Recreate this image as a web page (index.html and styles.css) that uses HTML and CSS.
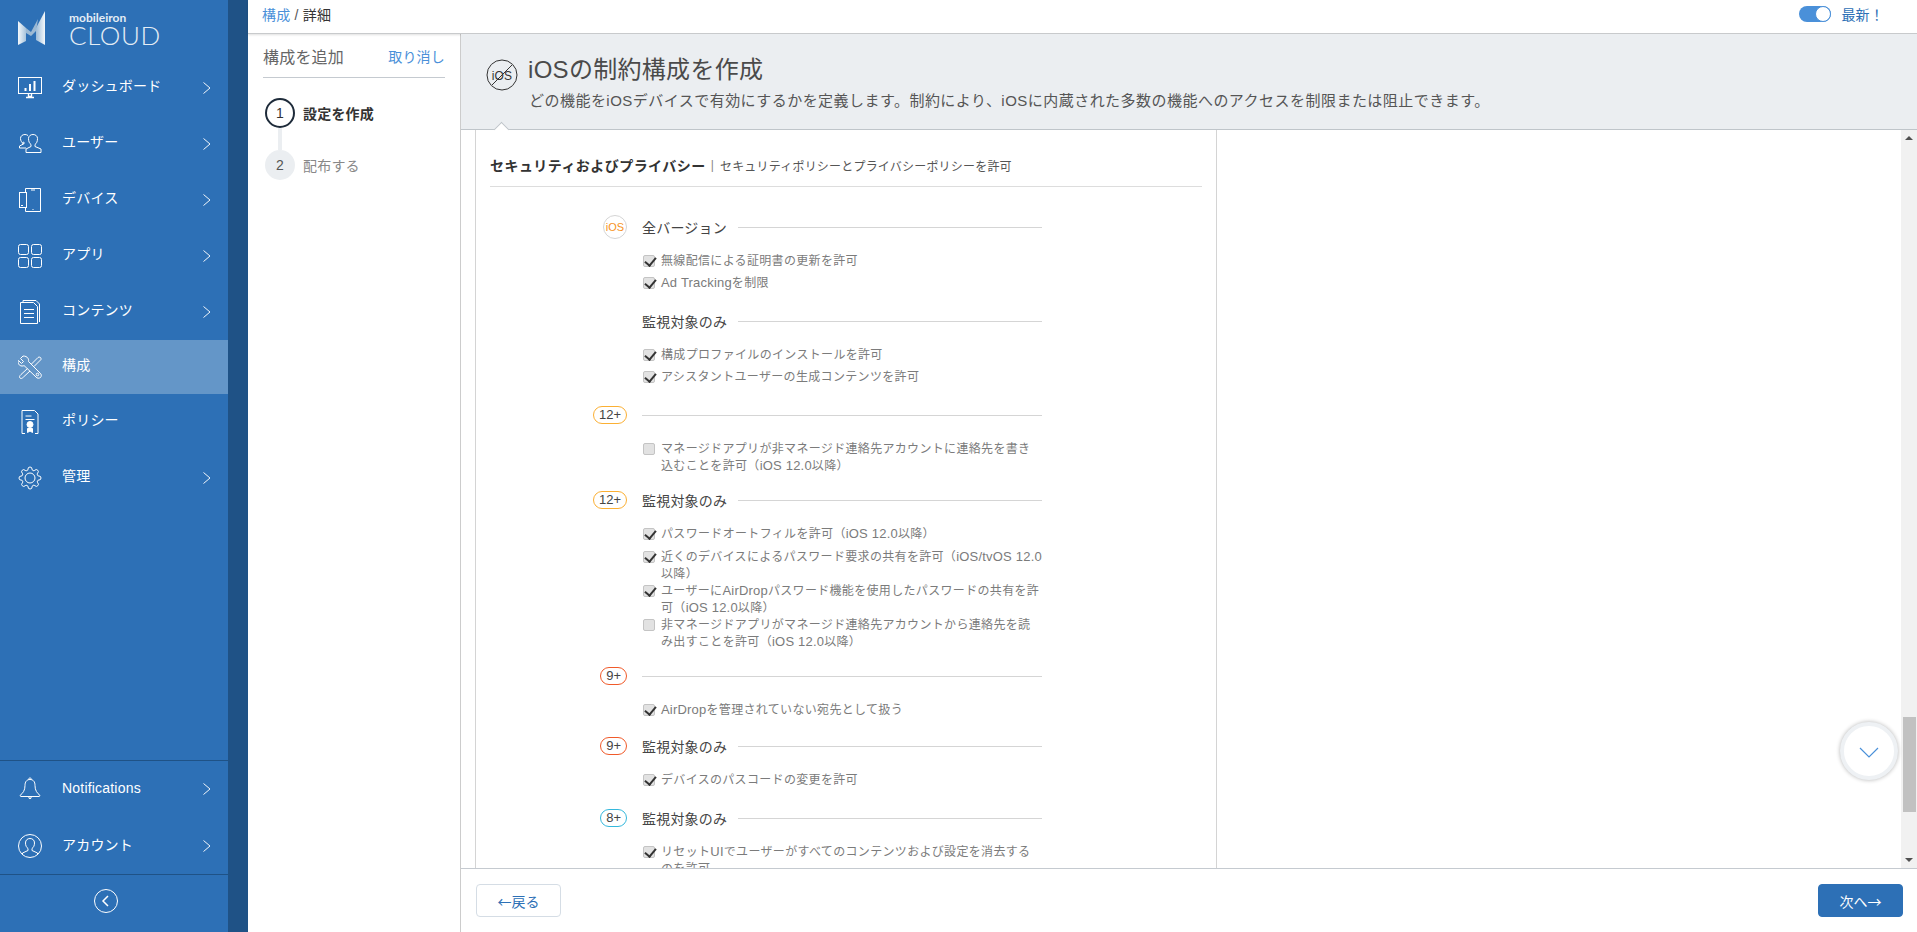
FILE: index.html
```html
<!DOCTYPE html>
<html lang="ja">
<head>
  <meta charset="UTF-8">
  <meta name="viewport" content="width=device-width, initial-scale=1.0">
  <title>iOSの制約構成を作成</title>
  <link rel="stylesheet" href="styles.css">
</head>
<body>
  <aside class="sidebar">
    <div class="brand">
      <svg class="brand-mark" viewBox="0 0 27 34" width="27" height="34">
        <defs>
          <linearGradient id="leg" x1="0" y1="0" x2="1" y2="0">
            <stop offset="0" stop-color="#9dbcd8"/>
            <stop offset="1" stop-color="#f4f8fb"/>
          </linearGradient>
          <linearGradient id="legl" x1="0" y1="0" x2="1" y2="0">
            <stop offset="0" stop-color="#f4f8fb"/>
            <stop offset="1" stop-color="#a8c4dc"/>
          </linearGradient>
        </defs>
        <polygon points="0,10 8,17 8,30 0,34" fill="url(#legl)"/>
        <polygon points="8,17 13,21 20,8 18,20 13,25 8,22" fill="#9cb9d3"/>
        <polygon points="27,0 27,34 18,29 18,17" fill="url(#leg)"/>
      </svg>
      <div class="brand-text">
        <span class="brand-small">mobileiron</span>
        <span class="brand-big">CLOUD</span>
      </div>
    </div>
    <nav class="nav">
      <a class="nav-item">
        <svg class="nav-icon" viewBox="0 0 24 24"><rect x=".5" y="1.5" width="23" height="16"/><path d="M7.5 15v-3M12 15V8M16.5 15V5" stroke-width="2"/><path d="M8 21.5h8M10.5 18v2.5h3V18" stroke-width="1.4"/></svg>
        <span class="nav-label">ダッシュボード</span>
        <svg class="nav-arrow" viewBox="0 0 8 12"><path d="M.5.5 7 6 .5 11.5"/></svg>
      </a>
      <a class="nav-item">
        <svg class="nav-icon" viewBox="0 0 24 24"><path d="M10.5 6.5C10.5 4 12.500 2.500 15 2.500s4.500 1.500 4.500 4c0 3-1 5-2.500 6v2l6 2.500v3.500H8v-3.500l5-2.500v-2c-1.500-1-2.500-3-2.500-6z"/><path d="M8 16H1.500v-2l4-2c-1.500-1.500-3-3-3-5.500C2.500 4 4.500 2.500 7 2.500c1 0 2 .3 3 1"/><circle cx="5.500" cy="11" r=".8"/></svg>
        <span class="nav-label">ユーザー</span>
        <svg class="nav-arrow" viewBox="0 0 8 12"><path d="M.5.5 7 6 .5 11.5"/></svg>
      </a>
      <a class="nav-item">
        <svg class="nav-icon" viewBox="0 0 24 24"><path d="M7.500 4.500V.5h15v23h-15v-4"/><rect x="1.500" y="4.500" width="7" height="15"/><path d="M13 2h4M3 17.500h2M14.500 21.500h1"/></svg>
        <span class="nav-label">デバイス</span>
        <svg class="nav-arrow" viewBox="0 0 8 12"><path d="M.5.5 7 6 .5 11.5"/></svg>
      </a>
      <a class="nav-item">
        <svg class="nav-icon" viewBox="0 0 24 24"><rect x=".5" y=".5" width="10" height="10" rx="2"/><rect x="13.500" y=".5" width="10" height="10" rx="2"/><rect x=".5" y="13.500" width="10" height="10" rx="2"/><rect x="13.500" y="13.500" width="10" height="10" rx="2"/></svg>
        <span class="nav-label">アプリ</span>
        <svg class="nav-arrow" viewBox="0 0 8 12"><path d="M.5.5 7 6 .5 11.5"/></svg>
      </a>
      <a class="nav-item">
        <svg class="nav-icon" viewBox="0 0 24 24"><path d="M2.500 2.500h13l4 4v17h-17z"/><path d="M5 2.500V.5h13l3.500 3.500v18"/><path d="M6 9.500h10M6 13.500h10M6 17.500h10"/></svg>
        <span class="nav-label">コンテンツ</span>
        <svg class="nav-arrow" viewBox="0 0 8 12"><path d="M.5.5 7 6 .5 11.5"/></svg>
      </a>
      <a class="nav-item nav-item-active">
        <svg class="nav-icon" viewBox="0 0 24 24"><path d="M5 1 2.500 3.500l3 3-2 2-3-3C-.5 8 1 11 4 11c1 0 1.500 0 2-.5L18 22c1 1.500 3 1.500 4.500.5 1.200-1.500 1-3.300-.3-4.300L10.500 6.500c.5-2-.5-5.500-5.500-5.500z"/><circle cx="19.500" cy="19.500" r="1.300"/><path d="M13.500 9 20 2.500c1-1 3-.2 3 1 .3.700 0 1-.5 1.500L16 11.500M9.500 13.500 3 19.500c-1.500 1.500-2 2.500-1 3.500s2.200.4 3.500-1l6.500-6"/></svg>
        <span class="nav-label">構成</span>
      </a>
      <a class="nav-item">
        <svg class="nav-icon" viewBox="0 0 24 24"><path d="M7 23.500H4V.5h12.500L20 4v19.500h-3"/><path d="M7.500 6h6M7.500 9.500h9"/><circle cx="12" cy="14.500" r="3" fill="#fff"/><path d="M9.500 22.500v-4h5v4l-2.500-1.500z" fill="#fff"/></svg>
        <span class="nav-label">ポリシー</span>
      </a>
      <a class="nav-item">
        <svg class="nav-icon" viewBox="0 0 24 24"><circle cx="12" cy="12" r="5"/><path d="M19.400 15a1.650 1.650 0 0 0 .33 1.820l.06.06a2 2 0 0 1 0 2.830 2 2 0 0 1-2.830 0l-.06-.06a1.650 1.650 0 0 0-1.820-.33 1.650 1.650 0 0 0-1 1.510V21a2 2 0 0 1-2 2 2 2 0 0 1-2-2v-.09A1.650 1.650 0 0 0 9 19.400a1.650 1.650 0 0 0-1.820.33l-.06.06a2 2 0 0 1-2.830 0 2 2 0 0 1 0-2.830l.06-.06a1.650 1.650 0 0 0 .33-1.820 1.650 1.650 0 0 0-1.510-1H3a2 2 0 0 1-2-2 2 2 0 0 1 2-2h.09A1.650 1.650 0 0 0 4.600 9a1.650 1.650 0 0 0-.33-1.820l-.06-.06a2 2 0 0 1 0-2.830 2 2 0 0 1 2.830 0l.06.06a1.650 1.650 0 0 0 1.820.33H9a1.650 1.650 0 0 0 1-1.510V3a2 2 0 0 1 2-2 2 2 0 0 1 2 2v.09a1.650 1.650 0 0 0 1 1.510 1.650 1.650 0 0 0 1.820-.33l.06-.06a2 2 0 0 1 2.830 0 2 2 0 0 1 0 2.830l-.06.06a1.650 1.650 0 0 0-.33 1.820V9a1.650 1.650 0 0 0 1.510 1H21a2 2 0 0 1 2 2 2 2 0 0 1-2 2h-.09a1.650 1.650 0 0 0-1.510 1z"/></svg>
        <span class="nav-label">管理</span>
        <svg class="nav-arrow" viewBox="0 0 8 12"><path d="M.5.5 7 6 .5 11.5"/></svg>
      </a>
    </nav>
    <div class="nav-bottom">
      <a class="nav-item nav-item-tall">
        <svg class="nav-icon" viewBox="0 0 24 24"><path d="M12 2.500c-3.500 0-5 2.500-5 6 0 5-2 7.500-5 10 0 .5.5 1 1 1h18c.5 0 1-.5 1-1-3-2.500-5-5-5-10 0-3.500-1.500-6-5-6z"/><path d="M10.500 2.500c0-2 3-2 3 0"/><path d="M10.500 20.500c.5 1.500 2.500 1.500 3 0" fill="#fff"/></svg>
        <span class="nav-label">Notifications</span>
        <svg class="nav-arrow" viewBox="0 0 8 12"><path d="M.5.5 7 6 .5 11.5"/></svg>
      </a>
      <a class="nav-item nav-item-tall">
        <svg class="nav-icon" viewBox="0 0 24 24"><circle cx="12" cy="12" r="11.500"/><path d="M4.500 20.500v-1.500l5.500-2.500v-2c-1.500-1-2.500-3-2.500-5.500 0-3 2-4.500 4.500-4.500s4.500 1.500 4.500 4.500c0 2.500-1 4.500-2.500 5.500v2l5.500 2.500v1.500"/></svg>
        <span class="nav-label">アカウント</span>
        <svg class="nav-arrow" viewBox="0 0 8 12"><path d="M.5.5 7 6 .5 11.5"/></svg>
      </a>
    </div>
    <div class="collapse">
      <svg class="collapse-icon" viewBox="0 0 24 24"><circle cx="12" cy="12" r="11.500"/><path d="M14 7l-5 5 5 5" stroke-width="1.500"/></svg>
    </div>
  </aside>

  <div class="page">
    <header class="topbar">
      <div class="crumbs"><a class="link">構成</a> / <span class="crumb-current">詳細</span></div>
      <div class="fresh">
        <span class="toggle"><span class="toggle-knob"></span></span>
        <span class="fresh-label">最新！</span>
      </div>
    </header>

    <div class="workspace">
      <div class="wizard">
        <div class="wizard-head">
          <span class="wizard-title">構成を追加</span>
          <a class="link">取り消し</a>
        </div>
        <div class="steps">
          <div class="step step-current"><span class="step-num">1</span><span>設定を作成</span></div>
          <div class="step-link"></div>
          <div class="step"><span class="step-num">2</span><span>配布する</span></div>
        </div>
      </div>

      <main class="editor">
        <div class="banner">
          <svg class="banner-icon" viewBox="0 0 32 32">
            <circle cx="16" cy="16" r="15"/>
            <text x="16" y="20.500" text-anchor="middle">iOS</text>
            <path d="M6 26 26 6"/>
          </svg>
          <div class="banner-text">
            <h1>iOSの制約構成を作成</h1>
            <p>どの機能をiOSデバイスで有効にするかを定義します。制約により、iOSに内蔵された多数の機能へのアクセスを制限または阻止できます。</p>
          </div>
          <span class="banner-notch"></span>
        </div>

        <div class="scroller">
          <div class="scroll-body">
            <section class="panel">
              <div class="panel-head">
                <strong class="panel-title">セキュリティおよびプライバシー</strong><span class="panel-sep">|</span><span class="panel-sub">セキュリティポリシーとプライバシーポリシーを許可</span>
              </div>

              <div class="group-head">
                <span class="badge-slot"><span class="badge-ios">iOS</span></span>
                <span class="group-title">全バージョン</span><span class="group-line"></span>
              </div>
              <div class="group">
                <label class="row"><input type="checkbox" checked disabled>無線配信による証明書の更新を許可</label>
                <label class="row"><input type="checkbox" checked disabled><span class="en">Ad Tracking</span>を制限</label>
              </div>

              <div class="group-head">
                <span class="badge-slot"></span>
                <span class="group-title">監視対象のみ</span><span class="group-line"></span>
              </div>
              <div class="group">
                <label class="row"><input type="checkbox" checked disabled>構成プロファイルのインストールを許可</label>
                <label class="row"><input type="checkbox" checked disabled>アシスタントユーザーの生成コンテンツを許可</label>
              </div>

              <div class="group-head">
                <span class="badge-slot"><span class="badge badge-12">12+</span></span>
                <span class="group-line"></span>
              </div>
              <div class="group group-wrapped">
                <label class="row row-wrap"><input type="checkbox" disabled>マネージドアプリが非マネージド連絡先アカウントに連絡先を書き込むことを許可（<span class="en">iOS 12.0</span>以降）</label>
              </div>

              <div class="group-head">
                <span class="badge-slot"><span class="badge badge-12">12+</span></span>
                <span class="group-title">監視対象のみ</span><span class="group-line"></span>
              </div>
              <div class="group group-wrapped">
                <label class="row row-tall"><input type="checkbox" checked disabled>パスワードオートフィルを許可（<span class="en">iOS 12.0</span>以降）</label>
                <label class="row row-wrap"><input type="checkbox" checked disabled>近くのデバイスによるパスワード要求の共有を許可（<span class="en">iOS/tvOS 12.0</span>以降）</label>
                <label class="row row-wrap"><input type="checkbox" checked disabled>ユーザーに<span class="en">AirDrop</span>パスワード機能を使用したパスワードの共有を許可（<span class="en">iOS 12.0</span>以降）</label>
                <label class="row row-wrap"><input type="checkbox" disabled>非マネージドアプリがマネージド連絡先アカウントから連絡先を読み出すことを許可（<span class="en">iOS 12.0</span>以降）</label>
              </div>

              <div class="group-head">
                <span class="badge-slot"><span class="badge badge-9">9+</span></span>
                <span class="group-line"></span>
              </div>
              <div class="group group-tight">
                <label class="row"><input type="checkbox" checked disabled><span class="en">AirDrop</span>を管理されていない宛先として扱う</label>
              </div>

              <div class="group-head">
                <span class="badge-slot"><span class="badge badge-9">9+</span></span>
                <span class="group-title">監視対象のみ</span><span class="group-line"></span>
              </div>
              <div class="group">
                <label class="row"><input type="checkbox" checked disabled>デバイスのパスコードの変更を許可</label>
              </div>

              <div class="group-head">
                <span class="badge-slot"><span class="badge badge-8">8+</span></span>
                <span class="group-title">監視対象のみ</span><span class="group-line"></span>
              </div>
              <div class="group">
                <label class="row row-wrap"><input type="checkbox" checked disabled>リセット<span class="en">UI</span>でユーザーがすべてのコンテンツおよび設定を消去するのを許可</label>
              </div>
            </section>
          </div>
          <div class="scrollbar">
            <span class="scroll-up"></span>
            <span class="scroll-thumb"></span>
            <span class="scroll-down"></span>
          </div>
          <button class="jump" type="button">
            <svg viewBox="0 0 20 12" width="20" height="12"><path d="M1 1l9 9 9-9"/></svg>
          </button>
        </div>

        <footer class="actions">
          <button class="btn btn-back" type="button">←戻る</button>
          <button class="btn btn-next" type="button">次へ→</button>
        </footer>
      </main>
    </div>
  </div>
</body>
</html>
```

FILE: styles.css
```css
* {
  box-sizing: border-box;
}
html, body {
  height: 100%;
}
body {
  margin: 0;
  display: flex;
  height: 100vh;
  overflow: hidden;
  font-family: "Liberation Sans", "Noto Sans CJK JP", sans-serif;
  font-size: 14px;
  letter-spacing: .2px;
  color: #555;
  background-color: #fff;
}
.link {
  color: #4a90d9;
}

/* sidebar */
.sidebar {
  flex: none;
  width: 248px;
  display: flex;
  flex-direction: column;
  background-color: #2d70b6;
  border-right: 20px solid #1f5286;
  color: #fff;
}
.brand {
  height: 60px;
  display: flex;
  align-items: flex-start;
  padding: 11px 0 0 18px;
}
.brand-text {
  display: flex;
  flex-direction: column;
  margin-left: 24px;
}
.brand-small {
  font-family: Lato, sans-serif;
  font-size: 12px;
  font-weight: 700;
  line-height: 13px;
  letter-spacing: 0;
  color: #e4edf5;
}
.brand-big {
  font-family: Lato, sans-serif;
  font-size: 26px;
  font-weight: 300;
  line-height: 23px;
  letter-spacing: .6px;
  color: #e4edf5;
}
.nav {
  flex: 1;
}
.nav-item {
  display: flex;
  align-items: center;
  height: 56px;
  padding-left: 18px;
}
.nav-item-active {
  height: 54px;
  background-color: #6496c8;
}
.nav-item-tall {
  height: 56.5px;
}
.nav-icon {
  flex: none;
  width: 24px;
  height: 24px;
  fill: none;
  stroke: #fff;
  stroke-width: 1;
}
.nav-label {
  flex: 1;
  margin-left: 20px;
  padding-bottom: 6px;
  font-size: 14px;
}
.nav-item-tall .nav-label {
  padding-bottom: 3px;
}
.nav-arrow {
  flex: none;
  width: 8px;
  height: 12px;
  margin-right: 17px;
  fill: none;
  stroke: #f0f5fa;
  stroke-width: 1;
}
.nav-bottom {
  border-top: 1px solid #1f5286;
  border-bottom: 1px solid #1f5286;
}
.collapse {
  height: 57px;
  display: flex;
  align-items: center;
  padding: 0 0 5px 94px;
}
.collapse-icon {
  width: 24px;
  height: 24px;
  fill: none;
  stroke: #fff;
  stroke-width: 1;
}

/* top bar */
.page {
  flex: 1;
  min-width: 0;
  display: flex;
  flex-direction: column;
}
.topbar {
  flex: none;
  height: 34px;
  display: flex;
  align-items: center;
  justify-content: space-between;
  padding: 0 33px 5px 14px;
  border-bottom: 1px solid #c8cacc;
  box-shadow: 0 1px 2px rgba(0, 0, 0, .12);
  position: relative;
}
.crumb-current {
  color: #333;
}
.fresh {
  display: flex;
  align-items: center;
}
.toggle {
  display: flex;
  justify-content: flex-end;
  width: 32px;
  height: 16px;
  border-radius: 8px;
  background-color: #4a90d9;
}
.toggle-knob {
  width: 16px;
  height: 16px;
  border-radius: 50%;
  background-color: #fff;
  border: 1px solid #4a90d9;
}
.fresh-label {
  margin-left: 10px;
  color: #2d70b6;
  font-size: 14px;
}

.workspace {
  flex: 1;
  min-height: 0;
  display: flex;
}

/* wizard steps */
.wizard {
  flex: none;
  width: 213px;
  padding: 0 15px;
  border-right: 1px solid #ccc;
}
.wizard-head {
  display: flex;
  align-items: center;
  justify-content: space-between;
  height: 44px;
  border-bottom: 1px solid #c5cad0;
}
.wizard-title {
  font-size: 16px;
  color: #666;
}
.steps {
  padding: 20px 0 0 2px;
}
.step {
  display: flex;
  align-items: center;
  color: #888;
}
.step-num {
  width: 30px;
  height: 30px;
  margin-right: 8px;
  display: flex;
  align-items: center;
  justify-content: center;
  border-radius: 50%;
  background-color: #ebeef1;
  color: #555;
}
.step-current {
  color: #333;
  font-weight: 700;
}
.step-current .step-num {
  background-color: #fff;
  border: 2px solid #1e2b3a;
  color: #333;
  font-weight: 400;
}
.step-link {
  width: 4px;
  height: 22px;
  margin-left: 13px;
  background-color: #ebeef1;
}

/* editor */
.editor {
  flex: 1;
  min-width: 0;
  display: flex;
  flex-direction: column;
}
.banner {
  flex: none;
  height: 96px;
  display: flex;
  align-items: flex-start;
  padding: 25px 0 0 25px;
  position: relative;
  background-color: #ebeef1;
  border-bottom: 1px solid #bfc5ca;
}
.banner-icon {
  flex: none;
  width: 32px;
  height: 32px;
  fill: none;
  stroke: #333;
  stroke-width: 1;
}
.banner-icon text {
  font-size: 12px;
  fill: #333;
  stroke: none;
}
.banner-text {
  margin-left: 10px;
}
.banner-text h1 {
  margin: -4px 0 0;
  font-size: 24px;
  font-weight: 400;
  line-height: 30px;
  letter-spacing: .3px;
  color: #4a4a4a;
}
.banner-text p {
  margin: 5px 0 0 1px;
  font-size: 15px;
  line-height: 22px;
  letter-spacing: .47px;
  color: #555;
}
.banner-notch {
  position: absolute;
  left: 35px;
  bottom: -6px;
  width: 11px;
  height: 11px;
  background-color: #fff;
  border-left: 1px solid #bfc5ca;
  border-top: 1px solid #bfc5ca;
  transform: rotate(45deg);
}
.scroller {
  flex: 1;
  min-height: 0;
  display: flex;
  position: relative;
}
.scroll-body {
  flex: 1;
  min-width: 0;
  overflow: hidden;
  padding-left: 14px;
}
.panel {
  width: 742px;
  min-height: 100%;
  padding: 0 14px 0 14px;
  border-left: 1px solid #d4d4d4;
  border-right: 1px solid #d4d4d4;
}
.panel-head {
  display: flex;
  align-items: center;
  height: 57px;
  padding-top: 14px;
  margin-bottom: 28px;
  border-bottom: 1px solid #ddd;
  color: #333;
}
.panel-title {
  letter-spacing: .45px;
}
.panel-sep {
  margin: 0 6px 0 5px;
  color: #888;
  font-size: 12px;
}
.panel-sub {
  font-size: 12px;
  color: #555;
}
.group-head {
  display: flex;
  align-items: center;
  height: 24px;
  margin-left: 100px;
  width: 452px;
  margin-bottom: 14px;
}
.badge-slot {
  flex: none;
  width: 37px;
  margin-right: 15px;
  display: flex;
  justify-content: flex-end;
}
.group-title {
  margin-right: 11px;
  padding-bottom: 1px;
  color: #444;
}
.group-line {
  flex: 1;
  border-top: 1px solid #d5d5d5;
}
.badge {
  height: 18px;
  padding: 0 5px;
  border: 1.5px solid #aaa;
  border-radius: 9px;
  font-size: 13px;
  line-height: 15px;
  letter-spacing: 0;
  color: #444;
}
.badge-12 {
  border-color: #fbb034;
}
.badge-9 {
  border-color: #f05a2a;
}
.badge-8 {
  border-color: #35b8dc;
}
.badge-ios {
  width: 24px;
  height: 24px;
  border: 1px solid #d5d5d5;
  border-radius: 50%;
  text-align: center;
  font-size: 11px;
  line-height: 22px;
  letter-spacing: 0;
  color: #f7931e;
}
.group {
  margin-left: 152px;
  width: 400px;
  margin-bottom: 17px;
}
.group-wrapped {
  margin-bottom: 13px;
}
.group-tight {
  margin-bottom: 15px;
}
.row {
  display: block;
  position: relative;
  padding-left: 19px;
  margin-bottom: 5px;
  font-size: 12px;
  line-height: 17px;
  letter-spacing: .33px;
  color: #7b7b7b;
}
.row .en {
  font-size: 13px;
  line-height: 1;
  letter-spacing: .2px;
}
.row-tall {
  margin-bottom: 6px;
}
.row-wrap {
  margin-bottom: 0;
}
.row input {
  appearance: none;
  position: absolute;
  left: 1px;
  top: 2px;
  width: 12px;
  height: 12px;
  margin: 0;
  border: 1px solid #c4c4c4;
  border-radius: 2px;
  background-color: #e2e2e2;
}
.row input:checked::after {
  content: "";
  position: absolute;
  left: 3px;
  top: -1px;
  width: 5px;
  height: 9px;
  border-right: 2.5px solid #333;
  border-bottom: 2.5px solid #333;
  transform: rotate(40deg);
}

/* fake scrollbar */
.scrollbar {
  flex: none;
  width: 16px;
  display: flex;
  flex-direction: column;
  align-items: center;
  background-color: #f1f1f1;
}
.scroll-up {
  margin-top: 6px;
  border: 4px solid transparent;
  border-top: 0;
  border-bottom: 4px solid #505050;
}
.scroll-thumb {
  width: 13px;
  height: 95px;
  margin-top: 577px;
  margin-left: 1px;
  background-color: #c1c1c1;
}
.scroll-down {
  margin-top: auto;
  margin-bottom: 6px;
  border: 4px solid transparent;
  border-bottom: 0;
  border-top: 4px solid #505050;
}
.jump {
  position: absolute;
  right: 19px;
  top: 592px;
  width: 58px;
  height: 58px;
  padding: 0;
  border: 4px solid #eef1f4;
  border-radius: 50%;
  background-color: #fff;
  box-shadow: 0 0 4px rgba(0, 0, 0, .3);
}
.jump svg {
  display: block;
  margin: 3px auto 0;
  fill: none;
  stroke: #4a90d9;
  stroke-width: 1.2;
}

/* footer */
.actions {
  flex: none;
  height: 64px;
  display: flex;
  align-items: center;
  justify-content: space-between;
  padding: 0 14px 0 15px;
  border-top: 1px solid #c5cad0;
}
.btn {
  width: 85px;
  height: 33px;
  padding: 0;
  border-radius: 4px;
  font-family: "Noto Sans CJK JP", sans-serif;
  font-size: 14px;
  letter-spacing: 0;
}
.btn-back {
  background-color: #fff;
  border: 1px solid #d5dde5;
  color: #2d70b6;
}
.btn-next {
  background-color: #2d70b6;
  border: 1px solid #2d70b6;
  color: #fff;
}
```
